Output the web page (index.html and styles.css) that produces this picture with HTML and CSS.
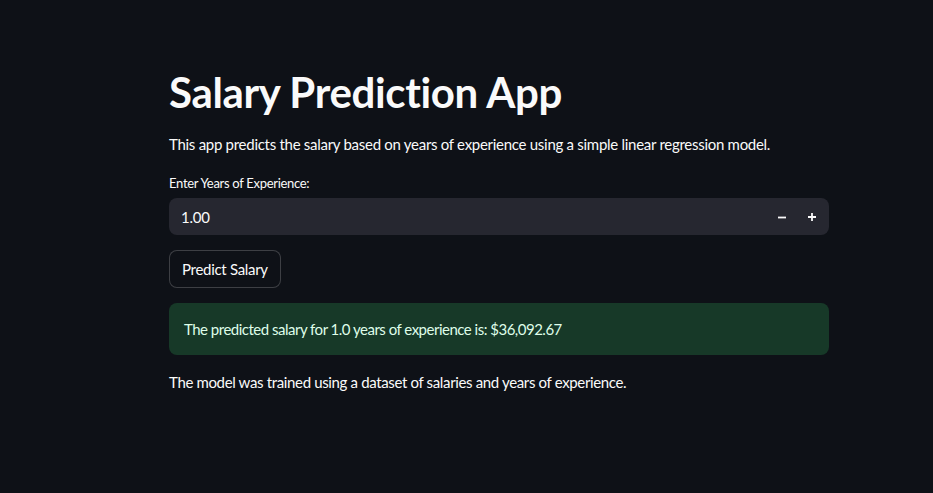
FILE: index.html
```html
<!DOCTYPE html>
<html lang="en">
<head>
<meta charset="utf-8">
<title>Salary Prediction App</title>
<link rel="stylesheet" href="styles.css">
</head>
<body>
<main class="main">
  <div class="block">
    <h1 class="title">Salary Prediction App</h1>
    <p class="text intro">This app predicts the salary based on years of experience using a simple linear regression model.</p>
    <div class="field">
      <label class="label">Enter Years of Experience:</label>
      <div class="number-input">
        <span class="value">1.00</span>
        <div class="steps">
          <button class="step" aria-label="minus"><svg width="10" height="10" viewBox="0 0 10 10"><path d="M1 5.5h8" stroke="#fafafa" stroke-width="1.8"/></svg></button>
          <button class="step" aria-label="plus"><svg width="10" height="10" viewBox="0 0 10 10"><path d="M1 5h8M5 1v8" stroke="#fafafa" stroke-width="1.8"/></svg></button>
        </div>
      </div>
    </div>
    <div class="btn-row"><button class="btn">Predict Salary</button></div>
    <div class="success">The predicted salary for 1.0 years of experience is: $36,092.67</div>
    <p class="text outro">The model was trained using a dataset of salaries and years of experience.</p>
  </div>
</main>
</body>
</html>
```
FILE: styles.css
```css
* { box-sizing: border-box; }
html, body {
  margin: 0;
  padding: 0;
  background: #0e1117;
  color: #fafafa;
  font-family: "Lato", "Noto Sans", sans-serif;
  height: 100%;
}
.main {
  display: flex;
  padding: 0 104px 0 169px;
}
.block {
  width: 660px;
  padding-top: 68px;
  display: flex;
  flex-direction: column;
}
.title {
  margin: 0;
  font-size: 42px;
  font-weight: 700;
  line-height: 48px;
  letter-spacing: -0.35px;
}
.text {
  margin: 0;
  font-size: 15px;
  line-height: 24px;
  letter-spacing: -0.35px;
}
.intro { margin-top: 16px; letter-spacing: -0.28px; }
.field { margin-top: 18px; display: flex; flex-direction: column; }
.label {
  font-size: 13px;
  line-height: 18px;
  height: 24px;
  letter-spacing: -0.3px;
}
.number-input {
  height: 37px;
  background: #262730;
  border-radius: 8px;
  display: flex;
  align-items: center;
  justify-content: space-between;
  padding-left: 12px;
  padding-right: 2px;
}
.value { font-size: 15px; letter-spacing: -0.2px; }
.steps { display: flex; height: 100%; }
.step {
  width: 30px;
  height: 100%;
  background: transparent;
  border: 0;
  padding: 0;
  display: flex;
  align-items: center;
  justify-content: center;
}
.btn-row { margin-top: 15px; }
.btn {
  height: 38px;
  padding: 0 12px;
  background: #0e1117;
  color: #fafafa;
  border: 1px solid rgba(250,250,250,0.2);
  border-radius: 8px;
  font-family: inherit;
  font-size: 15px;
  letter-spacing: -0.3px;
}
.success {
  margin-top: 15px;
  height: 52px;
  background: #173928;
  color: #dffde9;
  border-radius: 8px;
  padding: 0 15px;
  display: flex;
  align-items: center;
  font-size: 15px;
  letter-spacing: -0.5px;
}
.outro { margin-top: 15px; }
```
